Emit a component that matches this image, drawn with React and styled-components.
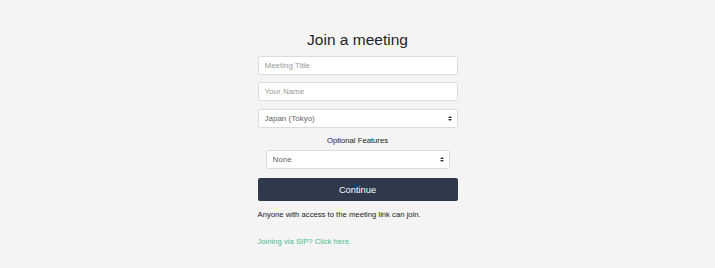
import React, { useState } from 'react';
import styled, { createGlobalStyle } from 'styled-components';

const GlobalStyle = createGlobalStyle`
  html, body {
    margin: 0;
    padding: 0;
    background: #f4f4f4;
    font-family: "Liberation Sans", Arial, sans-serif;
    color: #222;
  }
`;

const Page = styled.div`
  display: flex;
  justify-content: center;
  min-height: 268px;
`;

const Form = styled.form`
  width: 200px;
  display: flex;
  flex-direction: column;
  align-items: stretch;
  padding-top: 31px;
`;

const Title = styled.h1`
  margin: 0 0 7px;
  font-size: 15.5px;
  line-height: 18px;
  font-weight: 400;
  text-align: center;
  color: #1f1f1f;
`;

const Input = styled.input`
  box-sizing: border-box;
  height: 19px;
  margin-bottom: 7px;
  padding: 0 6px;
  border: 1px solid #dcdcdc;
  border-radius: 2px;
  background: #fff;
  font-family: inherit;
  font-size: 8px;
  color: #555;
  outline: none;

  &::placeholder {
    color: #9a9a9a;
  }
`;

const SelectWrap = styled.div`
  position: relative;
  margin: ${(p) => (p.$inset ? '0 8px' : '1px 0 0')};
`;

const Select = styled.select`
  display: block;
  box-sizing: border-box;
  width: 100%;
  height: 19px;
  padding: 0 16px 0 6px;
  border: 1px solid #dcdcdc;
  border-radius: 2px;
  background: #fff;
  font-family: inherit;
  font-size: 8px;
  color: #666;
  appearance: none;
  -webkit-appearance: none;
  outline: none;
`;

const Arrow = styled.svg`
  position: absolute;
  right: 6px;
  top: 7px;
  pointer-events: none;
`;

const Label = styled.div`
  margin-top: 8px;
  margin-bottom: 4px;
  font-size: 7.7px;
  line-height: 10px;
  text-align: center;
  color: #222;
`;

const Button = styled.button`
  margin-top: 9px;
  height: 23px;
  border: none;
  border-radius: 2px;
  background: #2e3a4c;
  color: #fff;
  font-family: inherit;
  font-size: 9.3px;
  cursor: pointer;
`;

const Note = styled.p`
  margin: 9px 0 0;
  font-size: 7.7px;
  line-height: 10px;
  color: #222;
`;

const SipLink = styled.a`
  margin-top: 17px;
  font-size: 7.7px;
  line-height: 10px;
  color: #4cbc8f;
  text-decoration: none;
`;

function UpDown() {
  return (
    <Arrow width="4" height="5" viewBox="0 0 4 5">
      <path d="M2 0 L4 2 L0 2 Z" fill="#333" />
      <path d="M0 3 L4 3 L2 5 Z" fill="#333" />
    </Arrow>
  );
}

export default function App() {
  const [region, setRegion] = useState('tokyo');
  const [feature, setFeature] = useState('none');

  return (
    <Page>
      <GlobalStyle />
      <Form onSubmit={(e) => e.preventDefault()}>
        <Title>Join a meeting</Title>
        <Input placeholder="Meeting Title" />
        <Input placeholder="Your Name" />
        <SelectWrap>
          <Select value={region} onChange={(e) => setRegion(e.target.value)}>
            <option value="tokyo">Japan (Tokyo)</option>
            <option value="virginia">United States (N. Virginia)</option>
          </Select>
          <UpDown />
        </SelectWrap>
        <Label>Optional Features</Label>
        <SelectWrap $inset>
          <Select value={feature} onChange={(e) => setFeature(e.target.value)}>
            <option value="none">None</option>
          </Select>
          <UpDown />
        </SelectWrap>
        <Button type="submit">Continue</Button>
        <Note>Anyone with access to the meeting link can join.</Note>
        <SipLink href="#sip">Joining via SIP? Click here.</SipLink>
      </Form>
    </Page>
  );
}
